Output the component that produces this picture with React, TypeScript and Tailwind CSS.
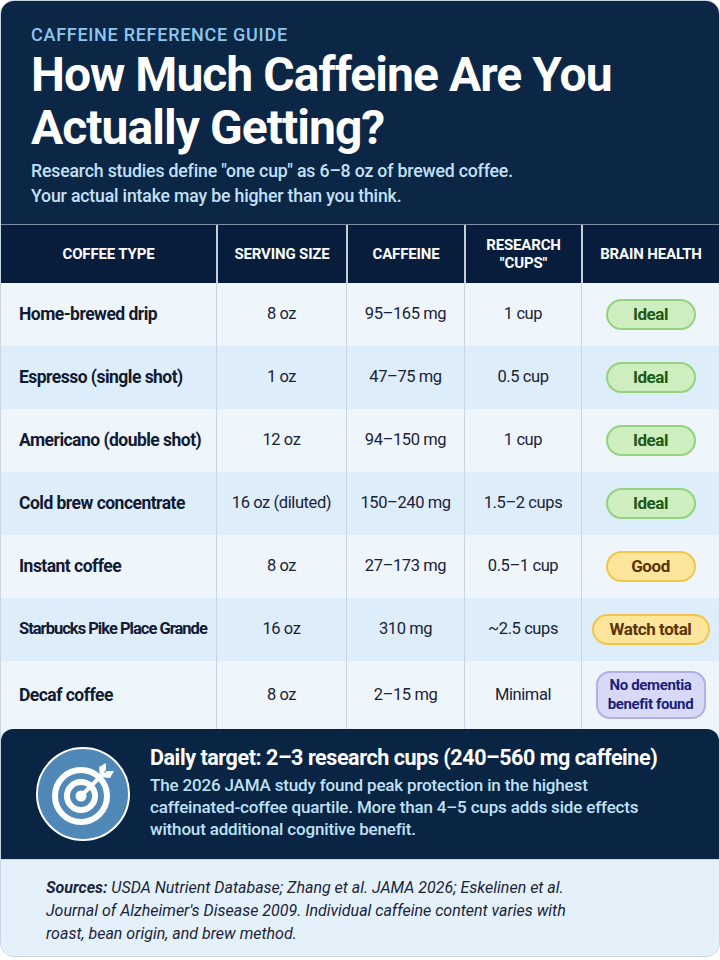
import React from "react";

type Tone = "ideal" | "good" | "watch" | "none";

interface Row {
  type: string;
  serving: string;
  caffeine: string;
  cups: string;
  health: string;
  tone: Tone;
}

const rows: Row[] = [
  { type: "Home-brewed drip", serving: "8 oz", caffeine: "95–165 mg", cups: "1 cup", health: "Ideal", tone: "ideal" },
  { type: "Espresso (single shot)", serving: "1 oz", caffeine: "47–75 mg", cups: "0.5 cup", health: "Ideal", tone: "ideal" },
  { type: "Americano (double shot)", serving: "12 oz", caffeine: "94–150 mg", cups: "1 cup", health: "Ideal", tone: "ideal" },
  { type: "Cold brew concentrate", serving: "16 oz (diluted)", caffeine: "150–240 mg", cups: "1.5–2 cups", health: "Ideal", tone: "ideal" },
  { type: "Instant coffee", serving: "8 oz", caffeine: "27–173 mg", cups: "0.5–1 cup", health: "Good", tone: "good" },
  { type: "Starbucks Pike Place Grande", serving: "16 oz", caffeine: "310 mg", cups: "~2.5 cups", health: "Watch total", tone: "watch" },
  { type: "Decaf coffee", serving: "8 oz", caffeine: "2–15 mg", cups: "Minimal", health: "No dementia benefit found", tone: "none" },
];

const cols = "grid grid-cols-[215px_130px_118px_117px_1fr]";

function Badge({ label, tone }: { label: string; tone: Tone }) {
  if (tone === "none") {
    return (
      <span className="w-[110px] rounded-[14px] border-2 border-[#aeb0e6] bg-[#d8d9f6] px-2 py-[3px] text-center text-[15px] font-bold leading-[19px] tracking-tight text-[#1c1f78]">
        No dementia
        <br />
        benefit found
      </span>
    );
  }
  const styles =
    tone === "ideal"
      ? "w-[90px] border-[#94d27f] bg-[#cfeebf] text-[#1f5a17]"
      : tone === "good"
      ? "w-[90px] border-[#f1c64a] bg-[#fde69c] text-[#5a330b]"
      : "w-[118px] border-[#f1c64a] bg-[#fde69c] text-[#5a330b]";
  return (
    <span
      className={`${styles} flex h-[31px] items-center justify-center rounded-full border-2 text-[17px] font-bold tracking-tight`}
    >
      {label}
    </span>
  );
}

function TargetIcon() {
  return (
    <div className="flex h-[94px] w-[94px] shrink-0 items-center justify-center rounded-full border-2 border-white bg-[#5088b8]">
      <svg width="70" height="70" viewBox="0 0 70 70" fill="none">
        <circle cx="33" cy="37" r="26" stroke="white" strokeWidth="6" />
        <circle cx="33" cy="37" r="14" stroke="white" strokeWidth="6" />
        <circle cx="33" cy="37" r="5.5" fill="white" />
        <path d="M33 37 L55 15" stroke="white" strokeWidth="4" strokeLinecap="round" />
        <path d="M52 18 L51 8 L58 4 L58 11 Z" fill="white" />
        <path d="M52 18 L62 19 L66 12 L59 12 Z" fill="white" />
      </svg>
    </div>
  );
}

export default function App() {
  return (
    <div
      className="min-h-[960px] w-[720px] bg-white pb-[3px]"
      style={{ fontFamily: "Roboto, 'Liberation Sans', sans-serif" }}
    >
      <div className="overflow-hidden rounded-[14px] border border-[#c9d6e2] bg-[#e4f1fb]">
        {/* header */}
        <div className="h-[223px] bg-[#0c2646] px-[30px] pt-[23px]">
          <p className="text-[18px] font-medium uppercase leading-[21px] tracking-[0.04em] text-[#8fc6ec]">
            Caffeine Reference Guide
          </p>
          <h1 className="mt-[3px] text-[48px] font-bold leading-[53px] tracking-[-0.02em] text-white">
            How Much Caffeine Are You
            <br />
            Actually Getting?
          </h1>
          <p className="mt-[5px] text-[17.7px] font-medium leading-[25px] tracking-[-0.01em] text-[#c3e1f6]">
            Research studies define "one cup" as 6–8 oz of brewed coffee.
            <br />
            Your actual intake may be higher than you think.
          </p>
        </div>

        {/* table */}
        <div className={`${cols} h-[59px] border-t border-[#7d8ea4] bg-[#081d3b] text-[15px] font-bold uppercase leading-[18px] tracking-[-0.01em] text-white`}>
          <div className="flex items-center justify-center">Coffee Type</div>
          <div className="flex items-center justify-center border-l-2 border-[#c4cfdb]">Serving Size</div>
          <div className="flex items-center justify-center border-l-2 border-[#c4cfdb]">Caffeine</div>
          <div className="flex items-center justify-center border-l-2 border-[#c4cfdb] text-center">
            Research
            <br />
            "Cups"
          </div>
          <div className="flex items-center justify-center border-l-2 border-[#c4cfdb]">Brain Health</div>
        </div>

        {rows.map((r, i) => (
          <div
            key={r.type}
            className={`${cols} ${i === rows.length - 1 ? "h-[68px]" : "h-[63px]"} ${
              i % 2 === 0 ? "bg-[#eef6fc]" : "bg-[#ddedf9]"
            } text-[16.5px] text-[#1a2236]`}
          >
            <div
              className={`flex items-center whitespace-nowrap pl-[18px] font-bold text-[#111a33] ${
                r.type.length > 24 ? "text-[16.5px] tracking-[-0.06em]" : "text-[17.5px] tracking-[-0.03em]"
              }`}
            >
              {r.type}
            </div>
            <div className="flex items-center justify-center border-l border-[#c5d5e3] tracking-tight">{r.serving}</div>
            <div className="flex items-center justify-center border-l border-[#c5d5e3] tracking-tight">{r.caffeine}</div>
            <div className="flex items-center justify-center border-l border-[#c5d5e3] tracking-tight">{r.cups}</div>
            <div className="flex items-center justify-center border-l border-[#c5d5e3]">
              <Badge label={r.health} tone={r.tone} />
            </div>
          </div>
        ))}

        {/* daily target */}
        <div className="bg-[#eef6fc]">
          <div className="flex h-[130px] items-center gap-[20px] rounded-t-[12px] bg-[#0a2444] pl-[35px] pr-[10px]">
            <TargetIcon />
            <div className="-mt-[4px]">
              <p className="whitespace-nowrap text-[21.5px] font-bold leading-[26px] tracking-[-0.02em] text-white">
                Daily target: 2–3 research cups (240–560 mg caffeine)
              </p>
              <p className="mt-[3px] whitespace-nowrap text-[17px] font-medium leading-[22px] tracking-[-0.01em] text-[#bfe1f6]">
                The 2026 JAMA study found peak protection in the highest
                <br />
                caffeinated-coffee quartile. More than 4–5 cups adds side effects
                <br />
                without additional cognitive benefit.
              </p>
            </div>
          </div>
        </div>

        {/* sources */}
        <div className="h-[97px] border-t border-[#c9d6e2] bg-[#e4f1fb] px-[45px] pt-[16px] text-[16px] italic leading-[23px] text-[#1c2438]">
          <span className="font-bold">Sources:</span> USDA Nutrient Database; Zhang et al. JAMA 2026; Eskelinen et al.
          <br />
          Journal of Alzheimer's Disease 2009. Individual caffeine content varies with
          <br />
          roast, bean origin, and brew method.
        </div>
      </div>
    </div>
  );
}
